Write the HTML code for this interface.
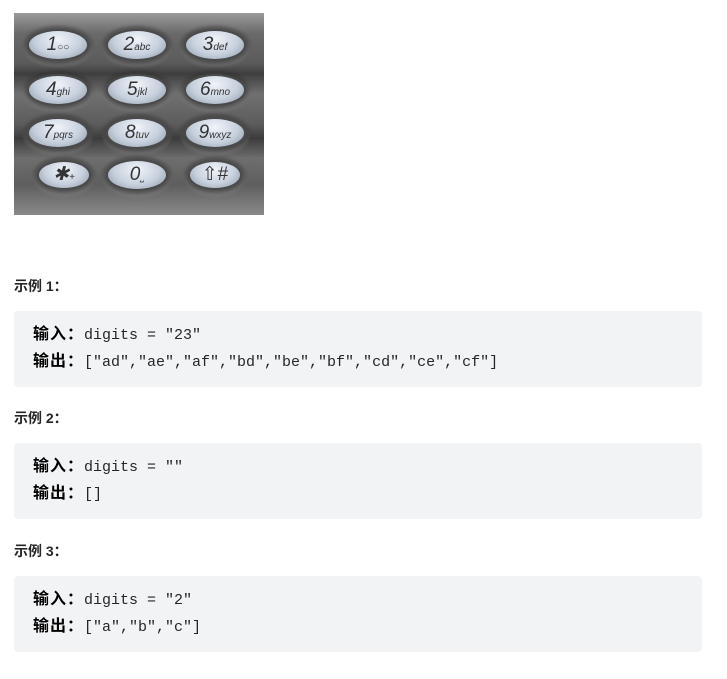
<!DOCTYPE html>
<html><head><meta charset="utf-8"><style>
body{margin:0;background:#fff;width:727px;height:679px;overflow:hidden;font-family:"Liberation Sans","Noto Sans CJK SC",sans-serif;color:#333}
.kp{position:absolute;left:14px;top:13px;width:250px;height:202px;background:linear-gradient(#9a9a9a 0%,#6a6a6a 10%,#5a5a5a 25%,#3e3e3e 30%,#707070 40%,#5c5c5c 55%,#3c3c3c 62%,#6e6e6e 72%,#5e5e5e 85%,#8a8a8a 100%)}
.k{position:absolute;width:58px;height:28px;border-radius:50%;background:radial-gradient(ellipse at 50% 30%,#f0f4fa 0%,#c7d0dd 55%,#8d97a6 100%);box-shadow:0 0 0 2px #4a4a4a,0 0 3px 5px rgba(40,40,40,.45),0 3px 3px 5px rgba(150,150,150,.35);font-family:"Liberation Sans",sans-serif;font-style:italic;color:#333;text-align:center;line-height:28px;font-size:19px}
.k small{font-size:10px}
h4{position:absolute;left:14px;margin:0;font-size:14px;font-weight:bold;color:#262626}
.pre{position:absolute;left:14px;width:688px;height:76px;background:#f2f3f5;border-radius:4px;box-sizing:border-box;padding:11px 0 0 19px;font-family:"Liberation Mono",monospace;font-size:15px;line-height:26px;color:#262626;white-space:pre}
.pre b{font-family:"Liberation Sans","Noto Sans CJK SC",sans-serif;font-size:16px;color:#000;letter-spacing:1px}
</style></head><body>
<div class="kp">
<div class="k" style="left:15px;top:18px">1<small>○○</small></div>
<div class="k" style="left:94px;top:18px">2<small>abc</small></div>
<div class="k" style="left:172px;top:18px">3<small>def</small></div>
<div class="k" style="left:15px;top:63px">4<small>ghi</small></div>
<div class="k" style="left:94px;top:63px">5<small>jkl</small></div>
<div class="k" style="left:172px;top:63px">6<small>mno</small></div>
<div class="k" style="left:15px;top:106px">7<small>pqrs</small></div>
<div class="k" style="left:94px;top:106px">8<small>tuv</small></div>
<div class="k" style="left:172px;top:106px">9<small>wxyz</small></div>
<div class="k" style="left:25px;top:149px;width:50px;height:26px;line-height:26px">✱<small>+</small></div>
<div class="k" style="left:94px;top:148px">0<small>⎵</small></div>
<div class="k" style="left:176px;top:149px;width:50px;height:26px;line-height:26px;font-style:normal">⇧#</div>
</div>
<h4 style="top:276px">示例 1：</h4>
<div class="pre" style="top:311px"><b>输入：</b>digits = "23"
<b>输出：</b>["ad","ae","af","bd","be","bf","cd","ce","cf"]</div>
<h4 style="top:408px">示例 2：</h4>
<div class="pre" style="top:443px"><b>输入：</b>digits = ""
<b>输出：</b>[]</div>
<h4 style="top:541px">示例 3：</h4>
<div class="pre" style="top:576px"><b>输入：</b>digits = "2"
<b>输出：</b>["a","b","c"]</div>
</body></html>
